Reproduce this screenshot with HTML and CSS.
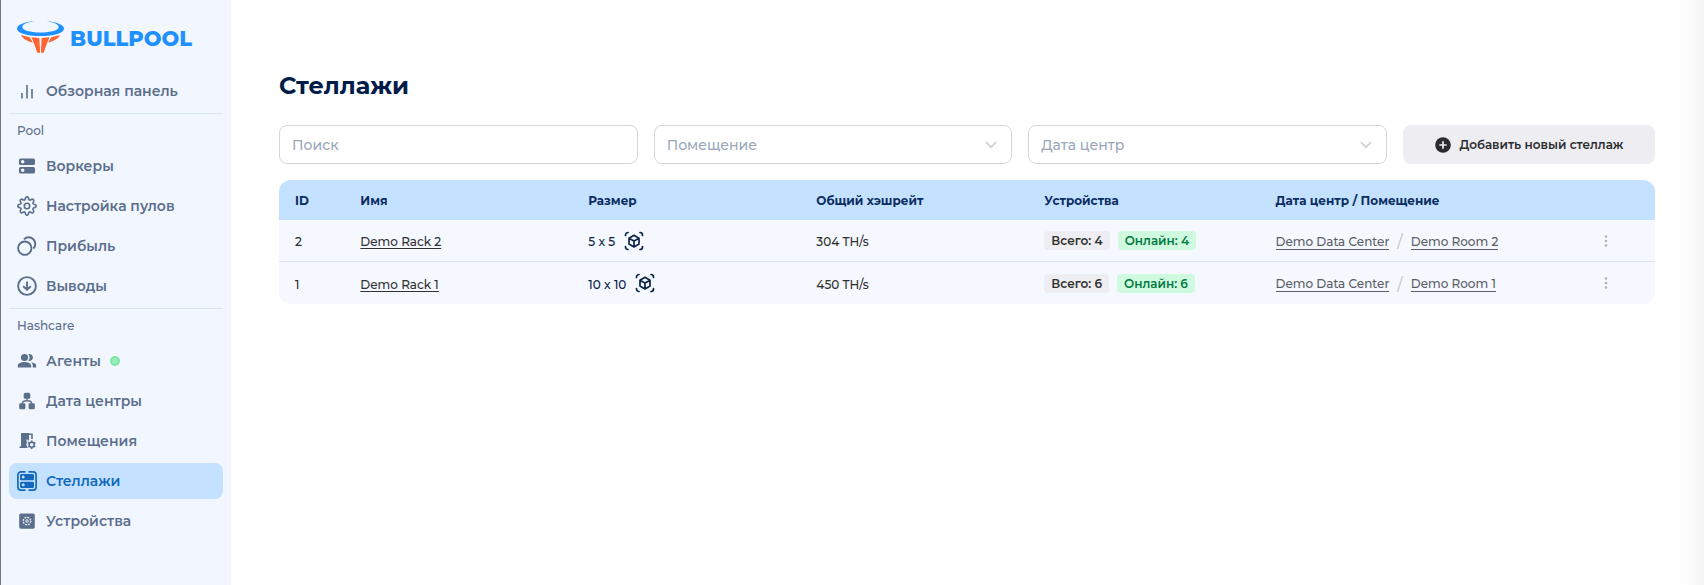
FILE: index.html
```html
<!DOCTYPE html>
<html lang="ru">
<head>
<meta charset="utf-8">
<title>Стеллажи — Bullpool</title>
<link rel="stylesheet" href="styles.css">
</head>
<body>
<svg class="sprite" aria-hidden="true">
  <symbol id="cube" viewBox="0 0 20 20">
    <g fill="none" stroke="currentColor" stroke-width="1.7" stroke-linecap="round" stroke-linejoin="round">
      <path d="M1.500 4.500V4a2.500 2.500 0 0 1 2.500-2.500M16 1.500A2.500 2.500 0 0 1 18.500 4v.5M18.500 15.500v.5A2.500 2.500 0 0 1 16 18.500M4 18.500A2.500 2.500 0 0 1 1.500 16v-.5"/>
      <path d="M10 4.300l5 2.900v5.800l-5 2.900-5-2.900V7.200zM5.200 7.400 10 10.100l4.800-2.700M10 10.100v5.600"/>
    </g>
  </symbol>
  <symbol id="chevron" viewBox="0 0 12 8">
    <path d="M1 1.200l5 5 5-5" fill="none" stroke="currentColor" stroke-width="1.700"/>
  </symbol>
  <symbol id="dots" viewBox="0 0 4 12">
    <g fill="currentColor"><circle cx="2" cy="1.500" r="1.300"/><circle cx="2" cy="6" r="1.300"/><circle cx="2" cy="10.500" r="1.300"/></g>
  </symbol>
</svg>
<div class="app">
  <aside class="sidebar">
    <a class="logo" href="#">
      <svg class="logo-mark" viewBox="0 0 48 34" aria-hidden="true">
        <path fill="#1e90ff" d="M18 1C8 1.500 0 4.500 0 8.500 0 13 10.500 16 24 16s24-3 24-7.500C48 4.500 40 1.500 30 1c8 1 12.500 3 12.500 5.700 0 3.300-7.500 5.600-18.500 5.600S5.500 10 5.500 6.700C5.500 4 10 2 18 1z"/>
        <g fill="#ff6332">
          <path d="M4 15l9 2.300 3.200 5.500C9.500 21 6 18.500 4 15zM44 15l-9 2.300-3.200 5.500C38.500 21 42 18.500 44 15z"/>
          <path d="M14.800 17.200l8 .7.800 15.300h-2.800l-2.800-8zM33.200 17.200l-8 .7-.8 15.300h2.800l2.800-8z"/>
        </g>
      </svg>
      <span class="logo-text">BULLPOOL</span>
    </a>
    <nav class="nav">
      <a class="nav-item" href="#">
        <svg viewBox="0 0 20 20"><path d="M5 12v5.500M10 4v13.500M15 8v9.500" fill="none" stroke="currentColor" stroke-width="1.600"/></svg>
        Обзорная панель</a>
      <hr>
      <h2>Pool</h2>
      <a class="nav-item" href="#">
        <svg viewBox="0 0 20 20"><path fill="currentColor" fill-rule="evenodd" d="M3.500 2.500h13A1.500 1.500 0 0 1 18 4v3.500A1.500 1.500 0 0 1 16.500 9h-13A1.500 1.500 0 0 1 2 7.500V4a1.500 1.500 0 0 1 1.500-1.500zM5.700 4a1.800 1.800 0 1 0 0 3.600 1.800 1.800 0 0 0 0-3.600zM3.500 11h13a1.500 1.500 0 0 1 1.500 1.500V16a1.500 1.500 0 0 1-1.500 1.500h-13A1.500 1.500 0 0 1 2 16v-3.500A1.500 1.500 0 0 1 3.500 11zm2.200 1.500a1.800 1.800 0 1 0 0 3.600 1.800 1.800 0 0 0 0-3.600z"/></svg>
        Воркеры</a>
      <a class="nav-item" href="#">
        <svg viewBox="0 0 20 20"><g fill="none" stroke="currentColor" stroke-width="1.600" stroke-linejoin="round"><circle cx="10" cy="10" r="2.700"/><path d="M8.300 3c.3-2.800 3.100-2.800 3.400 0 .2 1 1.200 1.400 2 .8 2.200-1.700 4.200.3 2.500 2.500-.6.800-.2 1.800.8 2 2.800.3 2.800 3.100 0 3.400-1 .2-1.400 1.200-.8 2 1.700 2.200-.3 4.200-2.500 2.500-.8-.6-1.800-.2-2 .8-.3 2.800-3.100 2.800-3.400 0-.2-1-1.200-1.400-2-.8-2.200 1.700-4.200-.3-2.500-2.500.6-.8.200-1.800-.8-2-2.800-.3-2.800-3.100 0-3.400 1-.2 1.400-1.200.8-2C2.100 4.100 4.100 2.100 6.300 3.800c.8.600 1.800.2 2-.8z"/></g></svg>
        Настройка пулов</a>
      <a class="nav-item" href="#">
        <svg viewBox="0 0 20 20"><g fill="none" stroke="currentColor" stroke-width="1.900"><circle cx="7.800" cy="12.200" r="6.700"/><path d="M7 3.300A6.300 6.300 0 1 1 16.400 12.500"/></g></svg>
        Прибыль</a>
      <a class="nav-item" href="#">
        <svg viewBox="0 0 20 20"><g fill="none" stroke="currentColor" stroke-width="1.900"><circle cx="10" cy="10" r="8.900"/><path d="M10 5.500v8M6.200 10.200l3.800 3.600 3.800-3.600"/></g></svg>
        Выводы</a>
      <hr>
      <h2>Hashcare</h2>
      <a class="nav-item" href="#">
        <svg viewBox="0 0 20 20"><g fill="currentColor"><circle cx="7.500" cy="6.500" r="3.600"/><path d="M.8 16.500v-1.800C.8 12.300 4.300 11 7.500 11s6.700 1.300 6.700 3.700v1.800zM11.300 3.200a3.500 3.500 0 1 1 0 6.600 5.300 5.300 0 0 0 0-6.600zM15.800 16.500v-1.800c0-1.500-.7-2.600-1.900-3.500 2.800.3 5.300 1.400 5.300 3.500v1.800z"/></g></svg>
        Агенты <span class="status-dot"></span></a>
      <a class="nav-item" href="#">
        <svg viewBox="0 0 20 20"><g fill="currentColor"><rect x="6.700" y="1.700" width="6.600" height="6" rx="1.500"/><rect x="2.200" y="12.300" width="6.200" height="6" rx="1.300"/><rect x="11.600" y="12.300" width="6.200" height="6" rx="1.300"/></g><path d="M10 7v2.800M5.300 12.500c0-2 1.500-2.700 4.700-2.700s4.700.7 4.700 2.700" fill="none" stroke="currentColor" stroke-width="1.400"/></svg>
        Дата центры</a>
      <a class="nav-item" href="#">
        <svg viewBox="0 0 20 20"><path fill="currentColor" fill-rule="evenodd" d="M4 2h8v15H2.500v-1.500H4zm5.500 6.500v2H11v-2z"/><path d="M11 3.300h4V8" fill="none" stroke="currentColor" stroke-width="1.600"/><circle cx="14.500" cy="13.500" r="5" fill="#f2f7ff"/><circle cx="14.700" cy="13.700" r="2.500" fill="none" stroke="currentColor" stroke-width="1.500"/><path d="M14.700 9.500v1.700M14.700 16.200v1.700M11.100 11.600l1.400.8M16.900 15l1.400.8M18.300 11.600l-1.400.8M12.500 15l-1.400.8" stroke="currentColor" stroke-width="1.700"/></svg>
        Помещения</a>
      <a class="nav-item active" href="#" aria-current="page">
        <svg viewBox="0 0 20 20"><path fill="none" stroke="currentColor" stroke-width="1.700" d="M8.500 .9H4A3.100 3.100 0 0 0 .9 4v12A3.100 3.100 0 0 0 4 19.100h4.500M11.500 .9H16A3.100 3.100 0 0 1 19.100 4v12a3.100 3.100 0 0 1-3.100 3.100h-4.500"/><path fill="currentColor" fill-rule="evenodd" d="M4.500 3h11A1.500 1.500 0 0 1 17 4.500V8a1.300 1.300 0 0 1-1.300 1.300H4.300A1.300 1.300 0 0 1 3 8V4.500A1.500 1.500 0 0 1 4.500 3zm1.700 1.600a1.500 1.500 0 1 0 0 3 1.500 1.500 0 0 0 0-3zM4.300 10.700h11.400A1.300 1.300 0 0 1 17 12v3.500a1.500 1.500 0 0 1-1.500 1.500h-11A1.500 1.500 0 0 1 3 15.500V12a1.300 1.300 0 0 1 1.300-1.300zm1.900 1.500a1.500 1.500 0 1 0 0 3 1.500 1.500 0 0 0 0-3z"/></svg>
        Стеллажи</a>
      <a class="nav-item" href="#">
        <svg viewBox="0 0 20 20"><rect x="2.200" y="2.500" width="15.600" height="15.200" rx="1.600" fill="currentColor"/><g fill="none" stroke="#f2f7ff"><circle cx="10" cy="10" r="3.700" stroke-width="1.300" stroke-dasharray="1.800 1.100"/><circle cx="10" cy="10" r="1.300" stroke-width=".9"/></g></svg>
        Устройства</a>
    </nav>
  </aside>
  <main class="main">
    <h1>Стеллажи</h1>
    <form class="filters">
      <input class="field" type="text" placeholder="Поиск" aria-label="Поиск">
      <div class="select">
        <select class="field" aria-label="Помещение"><option>Помещение</option></select>
        <svg><use href="#chevron"/></svg>
      </div>
      <div class="select">
        <select class="field" aria-label="Дата центр"><option>Дата центр</option></select>
        <svg><use href="#chevron"/></svg>
      </div>
      <button class="add" type="button">
        <svg viewBox="0 0 16 16"><circle cx="8" cy="8" r="7.800" fill="currentColor"/><path d="M8 4.300v7.400M4.300 8h7.400" stroke="#ededf2" stroke-width="1.700"/></svg>
        Добавить новый стеллаж</button>
    </form>
    <table class="racks">
      <colgroup><col class="col-id"><col class="col-name"><col class="col-name"><col class="col-name"><col class="col-devices"><col><col class="col-actions"></colgroup>
      <thead>
        <tr><th>ID</th><th>Имя</th><th>Размер</th><th>Общий хэшрейт</th><th>Устройства</th><th>Дата центр / Помещение</th><th></th></tr>
      </thead>
      <tbody>
        <tr>
          <td>2</td>
          <td><a class="rack" href="#">Demo Rack 2</a></td>
          <td><div class="size">5 x 5 <svg><use href="#cube"/></svg></div></td>
          <td>304 TH/s</td>
          <td><div class="tags"><span class="tag">Всего: 4</span><span class="tag online">Онлайн: 4</span></div></td>
          <td><div class="place"><a href="#">Demo Data Center</a><span>/</span><a href="#">Demo Room 2</a></div></td>
          <td><button class="more" type="button" aria-label="Действия"><svg><use href="#dots"/></svg></button></td>
        </tr>
        <tr>
          <td>1</td>
          <td><a class="rack" href="#">Demo Rack 1</a></td>
          <td><div class="size">10 x 10 <svg><use href="#cube"/></svg></div></td>
          <td>450 TH/s</td>
          <td><div class="tags"><span class="tag">Всего: 6</span><span class="tag online">Онлайн: 6</span></div></td>
          <td><div class="place"><a href="#">Demo Data Center</a><span>/</span><a href="#">Demo Room 1</a></div></td>
          <td><button class="more" type="button" aria-label="Действия"><svg><use href="#dots"/></svg></button></td>
        </tr>
      </tbody>
    </table>
  </main>
</div>
</body>
</html>
```
FILE: styles.css
```css
* { box-sizing: border-box; }
body {
  margin: 0;
  font-family: Montserrat, Inter, "Noto Sans", sans-serif;
  font-size: 12px;
  font-weight: 500;
  color: #303030;
  background: #fff;
}
a { color: inherit; text-decoration: none; }
button, input, select { font: inherit; }
.sprite { display: none; }
.app { display: flex; min-height: 100vh; border-left: 1px solid #77797d; }

.sidebar { width: 230px; flex: none; padding: 20px 8px; background: #f2f7ff; }
.logo { display: flex; align-items: center; gap: 6px; height: 34px; margin: 0 8px 19px; }
.logo-mark { width: 47px; height: 34px; flex: none; }
.logo-text {
  padding-top: 4px;
  font-size: 21px;
  font-weight: 800;
  line-height: 24px;
  color: #1e90ff;
}
.nav { display: flex; flex-direction: column; gap: 4px; }
.nav-item {
  display: flex;
  align-items: center;
  gap: 9px;
  height: 36px;
  padding: 0 8px;
  border-radius: 8px;
  font-size: 14px;
  font-weight: 600;
  color: #5b6e8c;
}
.nav-item svg { width: 20px; height: 20px; flex: none; }
.nav-item.active { background: #c4e2ff; color: #1269bf; }
.nav hr { width: 100%; margin: 0; border: 0; border-top: 1px solid #dae5f2; }
.nav h2 { margin: 3px 8px; font-size: 12px; font-weight: 500; line-height: 20px; color: #5b6e8c; }
.status-dot { width: 10px; height: 10px; border: 2px solid #7ce6a4; border-radius: 50%; background: #98efb8; }

.main {
  flex: 1;
  min-width: 0;
  padding: 70px 49px 24px 48px;
  background: linear-gradient(to left, #f3f3f3, #fdfdfd 16px, #fff 36px);
}
h1 { margin: 0 0 23px; font-size: 24px; font-weight: 700; line-height: 32px; color: #001d4a; }
.filters { display: grid; grid-template-columns: repeat(3, 1fr) 252px; gap: 16px; margin-bottom: 16px; }
.field {
  width: 100%;
  height: 39px;
  padding: 0 12px;
  border: 1px solid #d6d6d9;
  border-radius: 8px;
  background: transparent;
  font-size: 14px;
  color: #9ba7b9;
  appearance: none;
}
.field::placeholder { color: #9ba7b9; }
.select { display: grid; align-items: center; }
.select > * { grid-area: 1 / 1; }
.select svg { width: 12px; height: 8px; justify-self: end; margin-right: 15px; color: #cfd1d4; pointer-events: none; }
.add {
  display: flex;
  align-items: center;
  justify-content: center;
  gap: 9px;
  border: 0;
  border-radius: 8px;
  background: #ededf2;
  font-size: 12px;
  font-weight: 600;
  color: #2c2c2e;
}
.add svg { width: 16px; height: 16px; }

.racks {
  width: 100%;
  table-layout: fixed;
  border-collapse: separate;
  border-spacing: 0;
  border-radius: 12px;
  overflow: hidden;
  background: #f5f8ff;
}
.col-id { width: 4.75%; }
.col-name { width: 16.57%; }
.col-devices { width: 16.8%; }
.col-actions { width: 7.1%; }
.racks th { height: 40px; padding: 0 16px; background: #c4e2ff; font-weight: 700; text-align: left; color: #0c2d62; }
.racks td { height: 42px; padding: 2px 16px 0; }
.racks tbody tr:not(:last-child) td { border-bottom: 1px solid #dae5f0; }
.rack { text-decoration: underline; text-underline-offset: 2px; }
.size { display: flex; align-items: center; gap: 9px; color: #0b2447; }
.size svg { width: 20px; height: 20px; margin-bottom: 2px; }
.tags { display: flex; gap: 8px; margin-bottom: 2px; }
.tag { padding: 0 7px; border-radius: 4px; background: #ededf2; font-weight: 600; line-height: 19px; }
.tag.online { background: #d0fadf; color: #007a43; }
.place { display: flex; align-items: center; gap: 8px; color: #5c5e66; }
.place a { border-bottom: 1px solid #5c5e66; }
.place span { font-size: 16px; font-weight: 400; color: #bfc1c7; }
.more { display: grid; place-items: center; width: 100%; height: 24px; margin-bottom: 2px; padding: 0; border: 0; background: none; color: #aeb1b8; }
.more svg { width: 4px; height: 12px; }
```
